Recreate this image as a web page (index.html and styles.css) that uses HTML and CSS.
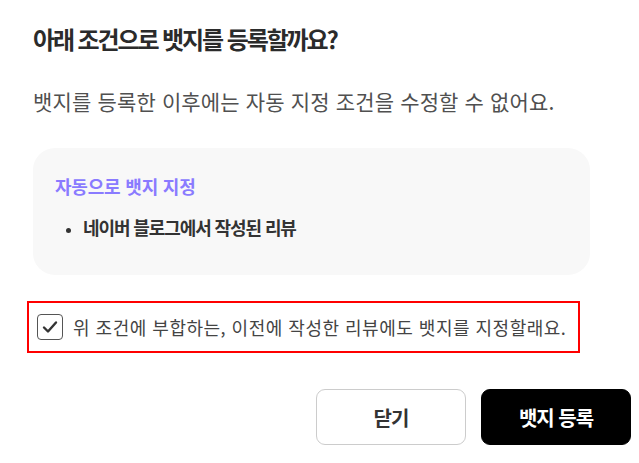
FILE: index.html
```html
<!DOCTYPE html>
<html lang="ko">
<head>
<meta charset="utf-8">
<link rel="stylesheet" href="styles.css">
</head>
<body>
<div class="dialog">
  <h1 class="title">아래 조건으로 뱃지를 등록할까요?</h1>
  <p class="desc">뱃지를 등록한 이후에는 자동 지정 조건을 수정할 수 없어요.</p>
  <div class="card">
    <div class="card-title">자동으로 뱃지 지정</div>
    <ul class="cond-list">
      <li>네이버 블로그에서 작성된 리뷰</li>
    </ul>
  </div>
  <label class="agree">
    <span class="checkbox">
      <svg width="16" height="14" viewBox="0 0 16 14"><path d="M2 7.5 L6 11.5 L14 2.5" fill="none" stroke="#333" stroke-width="2.4" stroke-linecap="round" stroke-linejoin="round"/></svg>
    </span>
    <span class="agree-text">위 조건에 부합하는, 이전에 작성한 리뷰에도 뱃지를 지정할래요.</span>
  </label>
  <div class="actions">
    <button class="btn btn-close">닫기</button>
    <button class="btn btn-primary">뱃지 등록</button>
  </div>
</div>
</body>
</html>
```

FILE: styles.css
```css
html, body {
  margin: 0;
  padding: 0;
  background: #ffffff;
}
body {
  font-family: "Noto Sans CJK KR", "Noto Sans", sans-serif;
  color: #333;
}
.dialog {
  padding: 22px 8px 0 33px;
  display: flex;
  flex-direction: column;
}
.title {
  margin: 0;
  font-size: 24px;
  line-height: 34px;
  font-weight: 700;
  color: #2b2b2b;
  letter-spacing: -2.1px;
}
.desc {
  margin: 31px 0 0;
  font-size: 21px;
  line-height: 29px;
  font-weight: 400;
  color: #505050;
  letter-spacing: 0.15px;
}
.card {
  margin-top: 32px;
  width: 557px;
  box-sizing: border-box;
  background: #f8f8f8;
  border-radius: 22px;
  padding: 26px 22px 35px;
}
.card-title {
  font-size: 18px;
  line-height: 25px;
  font-weight: 700;
  color: #8a7bff;
  letter-spacing: -0.2px;
}
.cond-list {
  margin: 16px 0 0;
  padding: 0 0 0 28px;
  font-size: 18px;
  line-height: 25px;
  font-weight: 700;
  color: #333;
  letter-spacing: -1.1px;
}
.cond-list li::marker {
  font-size: 14px;
}
.agree {
  margin: 26px 0 0 -6px;
  width: 553px;
  height: 52px;
  box-sizing: border-box;
  border: 2px solid #ff0000;
  display: flex;
  align-items: center;
  padding-left: 8px;
  gap: 10px;
}
.checkbox {
  width: 26px;
  height: 26px;
  box-sizing: border-box;
  border: 1.5px solid #555;
  border-radius: 4px;
  display: flex;
  align-items: center;
  justify-content: center;
}
.agree-text {
  font-size: 18px;
  line-height: 26px;
  color: #444;
  letter-spacing: 0.5px;
}
.actions {
  margin-top: 36px;
  display: flex;
  justify-content: flex-end;
  gap: 15px;
}
.btn {
  width: 150px;
  height: 56px;
  border-radius: 9px;
  font-family: "Noto Sans CJK KR", "Noto Sans", sans-serif;
  font-size: 20px;
  font-weight: 700;
  letter-spacing: -1px;
  cursor: pointer;
}
.btn-close {
  background: #fff;
  border: 1px solid #ccc;
  color: #333;
}
.btn-primary {
  background: #000;
  border: 1px solid #000;
  color: #fff;
}
```
